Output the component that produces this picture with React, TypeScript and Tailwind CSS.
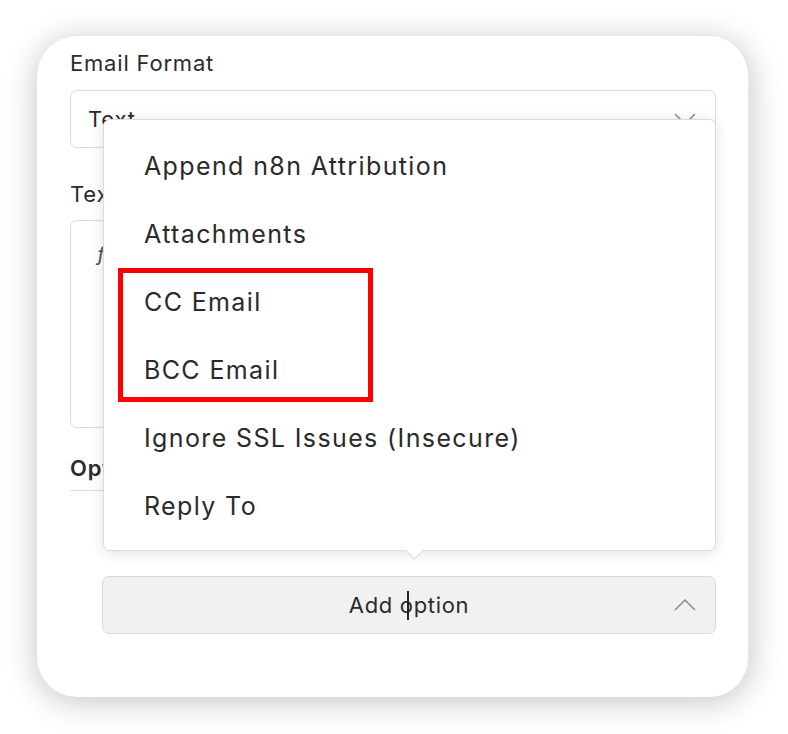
const options = [
  'Append n8n Attribution',
  'Attachments',
  'CC Email',
  'BCC Email',
  'Ignore SSL Issues (Insecure)',
  'Reply To',
];

const Chevron = ({ up }: { up?: boolean }) => (
  <svg width="22" height="12" viewBox="0 0 22 12" fill="none" stroke="#8c8c8c" strokeWidth="1.5">
    <polyline points={up ? '1,11 11,1 21,11' : '1,1 11,11 21,1'} />
  </svg>
);

const App = () => {
  return (
    <div className="w-[788px] h-[734px] bg-white pt-[36px] pl-[37px] font-['Inter',sans-serif] text-[#2b2b2b] tracking-[0.05em]">
      <div className="relative w-[713px] h-[661px] rounded-[40px] bg-white shadow-[0_4px_32px_rgba(0,0,0,0.24)] border-r-2 border-[#e6e6e6] px-[33px] pt-[13px]">
        {/* Email format */}
        <div className="text-[22px] leading-[28px]">Email Format</div>
        <div className="mt-[13px] w-[646px] h-[58px] rounded-[7px] border border-[#dcdcdc] flex items-center justify-between pl-[17px] pr-[19px]">
          <span className="text-[22px]">Text</span>
          <Chevron />
        </div>

        {/* Text */}
        <div className="mt-[32px] text-[22px] leading-[28px]">Text</div>
        <div className="mt-[12px] w-[646px] h-[208px] rounded-[7px] border border-[#dcdcdc] px-[26px] pt-[18px]">
          <span className="text-[20px] italic text-[#555]">ƒ</span>
        </div>

        {/* Options */}
        <div className="mt-[26px] w-[646px] border-b border-[#dcdcdc] pb-[8px] text-[22px] leading-[28px] font-semibold">
          Options
        </div>
        <div className="mt-[85px] ml-[32px] w-[614px] h-[58px] rounded-[7px] border border-[#d9d9d9] bg-[#f1f1f1] grid grid-cols-[1fr_auto_1fr] items-center">
          <div />
          <span className="text-[22px] tracking-[0.03em]">
            Add <span className="relative">o<span className="absolute left-[7px] top-[-1px] w-[2px] h-[29px] bg-[#222]" />ption</span>
          </span>
          <div className="flex justify-end pr-[19px]">
            <Chevron up />
          </div>
        </div>

        {/* Dropdown */}
        <div className="absolute left-[66px] top-[83px] w-[613px] h-[432px] rounded-[7px] border border-[#dcdcdc] bg-white shadow-[0_2px_14px_rgba(0,0,0,0.12)] pt-[13px]">
          {options.map((o) => (
            <div key={o} className="h-[68px] flex items-center pl-[40px] text-[25px] tracking-[0.055em] text-[#2a2a2a]">
              {o}
            </div>
          ))}
          <div className="absolute left-[304px] bottom-[-7px] w-[13px] h-[13px] rotate-45 bg-white border-r border-b border-[#dcdcdc]" />
          <div className="absolute left-[14px] top-[148px] w-[255px] h-[134px] border-[5px] border-[#ff0000]" />
        </div>
      </div>
    </div>
  );
};

export default App;
